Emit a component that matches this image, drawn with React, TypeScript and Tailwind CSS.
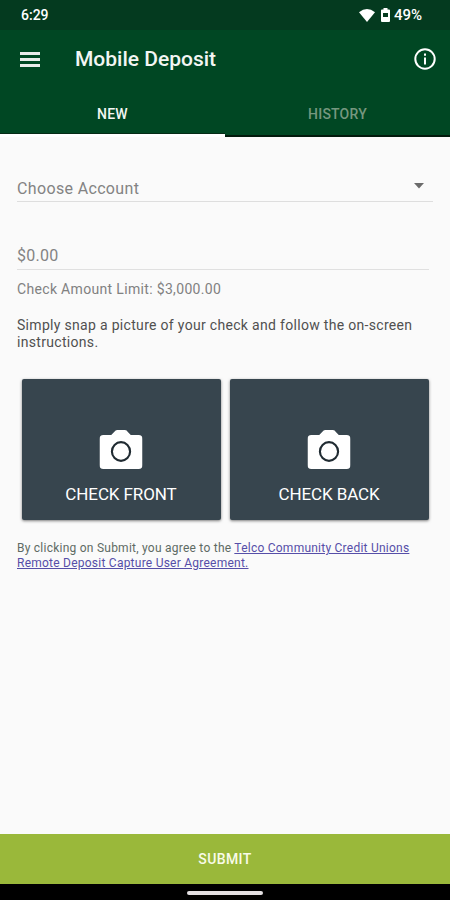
function StatusBar() {
    return (
        <div className="flex h-[30px] items-center justify-between bg-[#043a1f] pl-[21px] pr-[28px] text-[14px] font-medium text-white">
            <span>6:29</span>
            <div className="flex items-center">
                <svg width="16" height="13" viewBox="0 0 16 13" fill="currentColor">
                    <path d="M0 3.200Q8-3 16 3.200L8 13z" />
                </svg>
                <svg className="ml-[6px] mr-[4px]" width="9" height="14" viewBox="0 0 9 14">
                    <path d="M2.500 0h4v1.500H8q1 0 1 1V13q0 1-1 1H1q-1 0-1-1V2.500q0-1 1-1h1.500z" fill="#fff" />
                    <path d="M2 5h5v4h-5z" fill="#043a1f" />
                </svg>
                <span className="text-[15px]">49%</span>
            </div>
        </div>
    )
}

function Header() {
    return (
        <header className="bg-[#004723]">
            <div className="flex h-[60px] items-center pb-[2px] pl-[20px] pr-[14px]">
                <svg width="20" height="15" viewBox="0 0 20 15" fill="#e9ece9">
                    <path d="M0 0h20v3H0zM0 6h20v3H0zM0 12h20v3H0z" />
                </svg>
                <h1 className="ml-[35px] flex-1 pt-[2px] text-[21px] font-medium text-[#f3f6f3]">Mobile Deposit</h1>
                <svg width="22" height="22" viewBox="0 0 22 22" fill="none" stroke="#fff" strokeWidth="2">
                    <circle cx="11" cy="11" r="9.700" />
                    <path d="M11 5.500v2.200M11 9.500v7" />
                </svg>
            </div>
            <nav className="grid h-[47px] grid-cols-2 text-center text-[14px] font-medium leading-[48px] tracking-[0.2px]">
                <div className="h-[43px] text-[#f3f6f3] shadow-[0_1px_0_#052b16,0_4px_0_#fff]">NEW</div>
                <div className="h-[47px] border-b-2 border-[#021a0c] text-[#76977f]">HISTORY</div>
            </nav>
        </header>
    )
}

function CheckCard({ label }: { label: string }) {
    return (
        <button className="flex h-[141px] flex-col items-center rounded-[2px] bg-[#37454e] pt-[51px] text-white shadow-[0_1px_3px_rgba(0,0,0,0.5)]">
            <svg className="-translate-x-[0.5px]" width="43" height="40" viewBox="0 0 44 40" preserveAspectRatio="none">
                <path d="M4 5h8l3-3q1.500-2 3-2h8q2 0 3 2l3 3h8q4 0 4 4v26q0 4-4 4H4q-4 0-4-4V9q0-4 4-4z" fill="#fff" />
                <circle cx="22" cy="21.500" r="9.300" fill="none" stroke="#202b32" strokeWidth="2.200" />
            </svg>
            <span className="mt-[14px] -translate-x-[0.5px] text-[17px] leading-5 tracking-[-0.1px]">{label}</span>
        </button>
    )
}

export default function App() {
    return (
        <div className="flex h-[900px] w-[450px] flex-col bg-[#fafafa] font-['Roboto',sans-serif]">
            <StatusBar />
            <Header />
            <main className="flex-1 px-[17px] pt-[37px]">
                <div className="flex h-[28px] items-start justify-between border-b border-[#dedede] pr-[9px] text-[16px] leading-[29px] tracking-[0.35px] text-[#838383]">
                    <span>Choose Account</span>
                    <svg className="mt-[9px]" width="10" height="6" viewBox="0 0 10 6" fill="#6b6b6b">
                        <path d="M0 0h10L5 5.500z" />
                    </svg>
                </div>
                <div className="mr-[4px] mt-[39px] h-[29px] border-b border-[#e0e0e0] text-[16px] leading-[30px] tracking-[0.25px] text-[#838383]">$0.00</div>
                <p className="mt-[9px] text-[14px] leading-5 tracking-[0.33px] text-[#818181]">Check Amount Limit: $3,000.00</p>
                <p className="mt-[18px] whitespace-nowrap text-[14px] leading-[17px] tracking-[0.31px] text-[#505050]">
                    Simply snap a picture of your check and follow the on-screen<br />instructions.
                </p>
                <div className="ml-[5px] mr-[4px] mt-[28px] grid grid-cols-2 gap-[9px]">
                    <CheckCard label="CHECK FRONT" />
                    <CheckCard label="CHECK BACK" />
                </div>
                <p className="mt-[21px] whitespace-nowrap text-[12px] leading-[15px] tracking-[0.24px] text-[#5e6b64]">
                    By clicking on Submit, you agree to the{" "}
                    <a className="text-[#564ea8] underline">Telco Community Credit Unions<br />Remote Deposit Capture User Agreement.</a>
                </p>
            </main>
            <button className="h-[50px] bg-[#9ab83a] text-[14px] font-medium tracking-[0.4px] text-[#f9fbe9]">SUBMIT</button>
            <div className="flex h-[16px] items-center justify-center bg-black pt-[2px]">
                <div className="h-[4px] w-[76px] rounded-full bg-[#e4e0e2]" />
            </div>
        </div>
    )
}
